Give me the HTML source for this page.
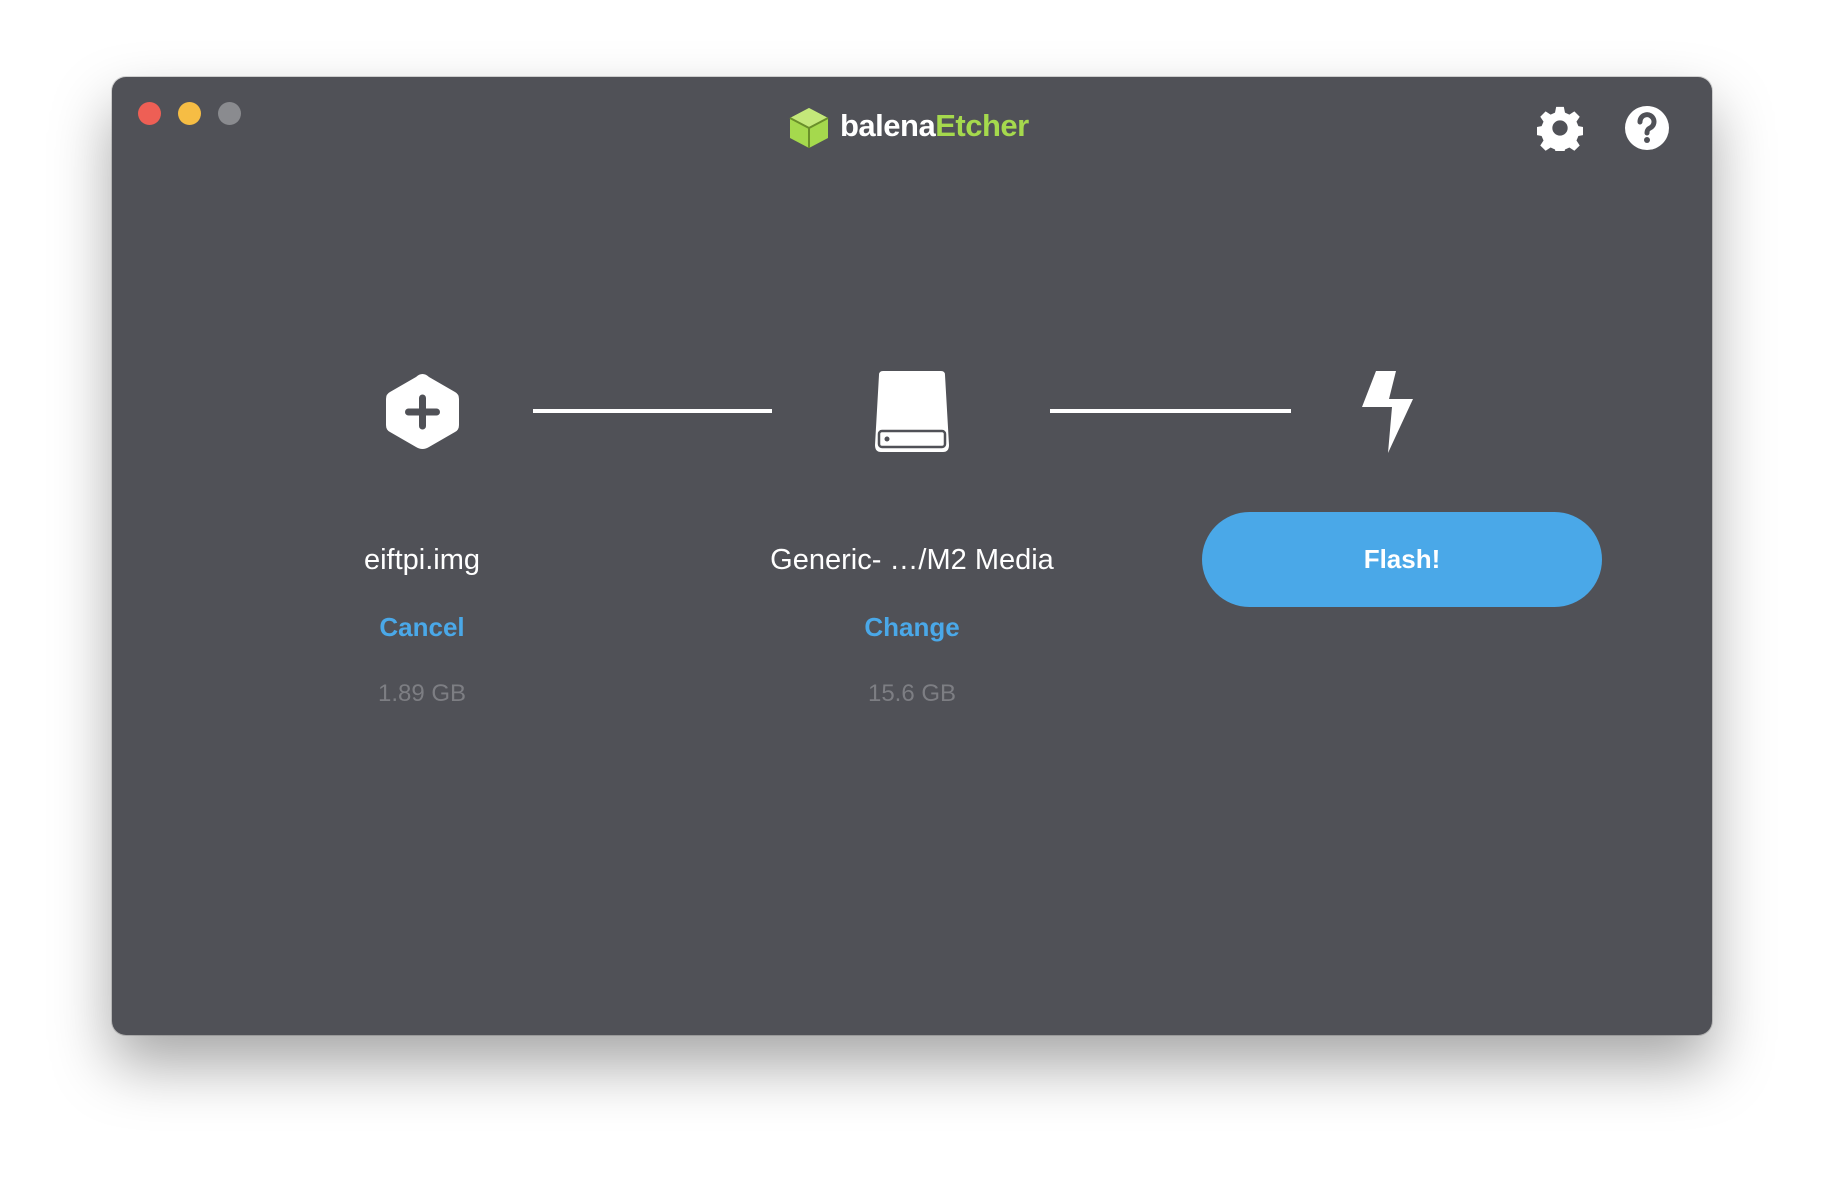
<!DOCTYPE html>
<html><head><meta charset="utf-8"><style>
html,body{margin:0;padding:0;width:1824px;height:1184px;background:#fff;overflow:hidden;font-family:"Liberation Sans",sans-serif}
.win{position:absolute;left:112px;top:77px;width:1600px;height:958px;background:#505157;border-radius:14px;box-shadow:0 30px 60px rgba(0,0,0,.35),0 0 0 1px rgba(0,0,0,.15)}
.dot{position:absolute;top:102px;width:23px;height:23px;border-radius:50%}
.t{position:absolute;transform:translateX(-50%);white-space:nowrap;text-align:center}
.line{position:absolute;top:409px;height:4px;background:#fff}
</style></head><body>
<div class="win"></div>
<div class="dot" style="left:138px;background:#ee5f55"></div>
<div class="dot" style="left:178px;background:#f6bd44"></div>
<div class="dot" style="left:218px;background:#8a8b8f"></div>

<svg style="position:absolute;left:788px;top:106px" width="42" height="44" viewBox="0 0 42 44">
<polygon points="21,2 40,12 40,32 21,42 2,32 2,12" fill="#a5d94d"/>
<polygon points="21,2 40,12 21,22 2,12" fill="#c4e87a"/>
<polyline points="2,12 21,22 40,12" fill="none" stroke="#6a8f2a" stroke-width="2"/>
<line x1="21" y1="22" x2="21" y2="42" stroke="#6a8f2a" stroke-width="2"/>
</svg>
<div style="position:absolute;left:840px;top:108px;font-size:31px;font-weight:bold;color:#fff;letter-spacing:-0.5px">balena<span style="color:#a5d94d">Etcher</span></div>

<svg style="position:absolute;left:1537px;top:105px" width="46" height="46" viewBox="0 0 24 24">
<path fill="#fff" fill-rule="evenodd" d="M10 1h4l.6 3 2.3 1 2.6-1.7 2.8 2.8-1.7 2.6 1 2.3 3 .6v4l-3 .6-1 2.3 1.7 2.6-2.8 2.8-2.6-1.7-2.3 1-.6 3h-4l-.6-3-2.3-1-2.6 1.7-2.8-2.8 1.7-2.6-1-2.3-3-.6v-4l3-.6 1-2.3-1.7-2.6 2.8-2.8 2.6 1.7 2.3-1z M12 8a4 4 0 1 0 0 8a4 4 0 1 0 0-8z"/>
</svg>
<svg style="position:absolute;left:1623px;top:104px" width="48" height="48" viewBox="0 0 48 48">
<circle cx="24" cy="24" r="22" fill="#fff"/>
<path d="M17 18a7 7 0 1 1 10 6c-2 1-3 2-3 5" fill="none" stroke="#505157" stroke-width="5" stroke-linecap="round"/>
<circle cx="24" cy="36" r="3" fill="#505157"/>
</svg>

<svg style="position:absolute;left:385px;top:372px" width="75" height="80" viewBox="0 0 75 80">
<path d="M37.5 2 Q41 2 44 5 L70 20 Q74 22 74 27 L74 53 Q74 58 70 60 L44 75 Q37.5 79 31 75 L5 60 Q1 58 1 53 L1 27 Q1 22 5 20 L31 5 Q34 2 37.5 2Z" fill="#fff"/>
<path d="M37.5 26 V54 M23.5 40 H51.5" stroke="#505157" stroke-width="7" stroke-linecap="round"/>
</svg>
<div class="line" style="left:533px;width:239px"></div>

<svg style="position:absolute;left:873px;top:371px" width="78" height="82" viewBox="0 0 78 82">
<path d="M10 0 H68 Q72 0 72 4 L76 74 Q76 81 70 81 H8 Q2 81 2 74 L6 4 Q6 0 10 0Z" fill="#fff"/>
<rect x="6" y="60" width="66" height="16" rx="3" fill="none" stroke="#505157" stroke-width="2.5"/>
<circle cx="14" cy="68" r="2.5" fill="#505157"/>
</svg>
<div class="line" style="left:1050px;width:241px"></div>

<svg style="position:absolute;left:1360px;top:371px" width="56" height="82" viewBox="0 0 56 82">
<polygon points="16,0 36,0 29,28 53,28 28,82 32,36 2,36" fill="#fff"/>
</svg>

<div class="t" style="left:422px;top:544px;font-size:29px;color:#fff">eiftpi.img</div>
<div class="t" style="left:422px;top:612px;font-size:26px;font-weight:bold;color:#4aa8e8">Cancel</div>
<div class="t" style="left:422px;top:680px;font-size:24px;color:#7d7e83">1.89 GB</div>

<div class="t" style="left:912px;top:544px;font-size:29px;color:#fff">Generic- …/M2 Media</div>
<div class="t" style="left:912px;top:612px;font-size:26px;font-weight:bold;color:#4aa8e8">Change</div>
<div class="t" style="left:912px;top:680px;font-size:24px;color:#7d7e83">15.6 GB</div>

<div style="position:absolute;left:1202px;top:512px;width:400px;height:95px;border-radius:48px;background:#4aa8e8;color:#fff;font-weight:bold;font-size:26px;line-height:95px;text-align:center">Flash!</div>
</body></html>
